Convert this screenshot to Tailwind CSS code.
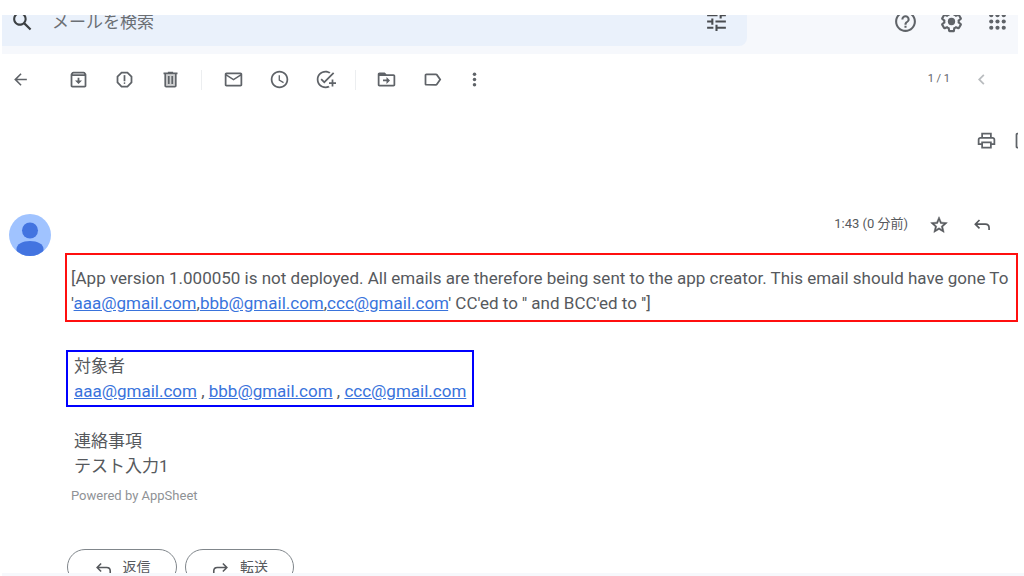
<!DOCTYPE html>
<html lang="ja">
<head>
<meta charset="utf-8">
<meta name="viewport" content="width=device-width, initial-scale=1">
<title>メール</title>
<script src="https://cdn.jsdelivr.net/npm/@tailwindcss/browser@4"></script>
</head>
<body class="bg-white pt-[15px] pl-0.5 pr-1.5 font-['Roboto','Noto_Sans_CJK_JP',sans-serif] text-[#56595d]">

<header class="h-[39px] overflow-hidden bg-[#f6f8fc]">
  <div class="-mt-[18px] flex h-[49px] items-center">
    <form class="flex h-full flex-1 items-center rounded-br-lg bg-[#eaf1fb] pr-[18px] pl-2" role="search">
      <button type="button" aria-label="検索" class="text-[#3c4043]">
        <svg class="size-[25px]" viewBox="0 0 24 24" fill="currentColor"><path d="M20.49 19l-5.73-5.73C15.53 12.2 16 10.91 16 9.5 16 5.91 13.09 3 9.5 3S3 5.91 3 9.5 5.91 16 9.5 16c1.41 0 2.7-.47 3.77-1.24L19 20.49 20.49 19zM5 9.5C5 7.01 7.01 5 9.5 5S14 7.01 14 9.5 11.99 14 9.5 14 5 11.99 5 9.5z"/></svg>
      </button>
      <input type="search" aria-label="メールを検索" placeholder="メールを検索" class="ml-[17px] min-w-0 flex-1 bg-transparent pt-0.5 text-[17px] outline-none placeholder:text-[#6b6f74]">
      <button type="button" aria-label="検索オプション" class="text-[#4a4d51]">
        <svg class="size-[25px]" viewBox="0 0 24 24" fill="currentColor"><path d="M3 17v2h6v-2H3zM3 5v2h10V5H3zm10 16v-2h8v-2h-8v-2h-2v6h2zM7 9v2H3v2h4v2h2V9H7zm14 4v-2H11v2h10zm-6-4h2V7h4V5h-4V3h-2v6z"/></svg>
      </button>
    </form>
    <div class="flex w-[271px] justify-end gap-1.5 pr-px text-[#5f6368]">
      <button type="button" aria-label="サポート" class="flex w-10 justify-center">
        <svg class="size-[25px]" viewBox="0 0 24 24" fill="currentColor"><path d="M11 18h2v-2h-2v2zm1-16C6.48 2 2 6.48 2 12s4.48 10 10 10 10-4.48 10-10S17.52 2 12 2zm0 18c-4.41 0-8-3.59-8-8s3.59-8 8-8 8 3.59 8 8-3.59 8-8 8zm0-14c-2.21 0-4 1.79-4 4h2c0-1.1.9-2 2-2s2 .9 2 2c0 2-3 1.75-3 5h2c0-2.25 3-2.5 3-5 0-2.21-1.79-4-4-4z"/></svg>
      </button>
      <button type="button" aria-label="設定" class="flex w-10 justify-center">
        <svg class="size-[25px]" viewBox="0 0 24 24" fill="currentColor"><path d="M13.85 22.25h-3.7c-.74 0-1.36-.54-1.45-1.27l-.27-1.89c-.27-.14-.53-.29-.79-.46l-1.8.72c-.7.26-1.47-.03-1.81-.65L2.2 15.53c-.35-.66-.2-1.44.36-1.88l1.53-1.19c-.01-.15-.02-.3-.02-.46 0-.15.01-.31.02-.46l-1.52-1.19c-.59-.45-.74-1.26-.37-1.88l1.85-3.19c.34-.62 1.11-.9 1.79-.63l1.81.73c.26-.17.52-.32.78-.46l.27-1.91c.09-.7.71-1.25 1.44-1.25h3.7c.74 0 1.36.54 1.45 1.27l.27 1.89c.27.14.53.29.79.46l1.8-.72c.71-.26 1.48.03 1.82.65l1.84 3.18c.36.66.2 1.44-.36 1.88l-1.52 1.19c.01.15.02.3.02.46s-.01.31-.02.46l1.52 1.19c.56.45.72 1.23.37 1.86l-1.86 3.22c-.34.62-1.11.9-1.8.63l-1.8-.72c-.26.17-.52.32-.78.46l-.27 1.91c-.1.68-.72 1.22-1.46 1.22zm-3.23-2h2.76l.37-2.55.53-.22c.44-.18.88-.44 1.34-.78l.45-.34 2.38.96 1.38-2.4-2.03-1.58.07-.56c.03-.26.06-.51.06-.78s-.03-.53-.06-.78l-.07-.56 2.03-1.58-1.39-2.4-2.39.96-.45-.35c-.42-.32-.87-.58-1.33-.77l-.52-.22-.37-2.55h-2.76l-.37 2.55-.53.21c-.44.19-.88.44-1.34.79l-.45.33-2.38-.95-1.39 2.39 2.03 1.58-.07.56a7 7 0 0 0-.06.79c0 .26.02.53.06.78l.07.56-2.03 1.58 1.38 2.4 2.39-.96.45.35c.43.33.86.58 1.33.77l.53.22.38 2.55z"/><circle cx="12" cy="12" r="3.5"/></svg>
      </button>
      <button type="button" aria-label="アプリ" class="flex w-10 justify-center">
        <svg class="size-[25px]" viewBox="0 0 24 24" fill="currentColor"><circle cx="6" cy="6" r="2"/><circle cx="12" cy="6" r="2"/><circle cx="18" cy="6" r="2"/><circle cx="6" cy="12" r="2"/><circle cx="12" cy="12" r="2"/><circle cx="18" cy="12" r="2"/><circle cx="6" cy="18" r="2"/><circle cx="12" cy="18" r="2"/><circle cx="18" cy="18" r="2"/></svg>
      </button>
    </div>
  </div>
</header>

<nav class="flex h-[51px] items-center text-[#5f6368]" aria-label="ツールバー">
  <button type="button" aria-label="戻る" class="mr-[17px] flex w-9 justify-center">
    <svg class="size-[19px]" viewBox="0 0 24 24" fill="currentColor"><path d="M20 11H7.83l5.59-5.59L12 4l-8 8 8 8 1.41-1.41L7.83 13H20v-2z"/></svg>
  </button>
  <button type="button" aria-label="アーカイブ" class="flex w-[46px] justify-center">
    <svg class="size-[21px]" viewBox="0 0 24 24" fill="currentColor"><path d="M20.54 5.23l-1.39-1.68C18.88 3.21 18.47 3 18 3H6c-.47 0-.88.21-1.16.55L3.46 5.23C3.17 5.57 3 6.02 3 6.5V19c0 1.1.9 2 2 2h14c1.1 0 2-.9 2-2V6.5c0-.48-.17-.93-.46-1.27zM6.24 5h11.52l.83 1H5.42l.82-1zM5 19V8h14v11H5zm8-9h-2v3H8l4 4 4-4h-3z"/></svg>
  </button>
  <button type="button" aria-label="迷惑メールを報告" class="flex w-[46px] justify-center">
    <svg class="size-[21px]" viewBox="0 0 24 24" fill="currentColor"><path d="M15.73 3H8.27L3 8.27v7.46L8.27 21h7.46L21 15.73V8.27L15.73 3zM19 14.9L14.9 19H9.1L5 14.9V9.1L9.1 5h5.8L19 9.1v5.8z"/><circle cx="12" cy="16" r="1"/><path d="M11 7h2v7h-2z"/></svg>
  </button>
  <button type="button" aria-label="削除" class="flex w-[46px] justify-center">
    <svg class="size-[21px]" viewBox="0 0 24 24" fill="currentColor"><path fill-opacity=".3" d="M7 6h10v13H7z"/><path d="M15 4V3H9v1H4v2h1v13c0 1.1.9 2 2 2h10c1.1 0 2-.9 2-2V6h1V4h-5zm2 15H7V6h10v13zM9 8h2v9H9zm4 0h2v9h-2z"/></svg>
  </button>
  <div class="mx-2 h-5 w-px bg-[#eceef0]"></div>
  <button type="button" aria-label="未読にする" class="flex w-[46px] justify-center">
    <svg class="size-[21px]" viewBox="0 0 24 24" fill="currentColor"><path d="M22 6c0-1.1-.9-2-2-2H4c-1.1 0-2 .9-2 2v12c0 1.1.9 2 2 2h16c1.1 0 2-.9 2-2V6zm-2 0l-8 5-8-5h16zm0 12H4V8l8 5 8-5v10z"/></svg>
  </button>
  <button type="button" aria-label="スヌーズ" class="flex w-[46px] justify-center">
    <svg class="size-[21px]" viewBox="0 0 24 24" fill="currentColor"><path d="M11.99 2C6.47 2 2 6.48 2 12s4.47 10 9.99 10C17.52 22 22 17.52 22 12S17.52 2 11.99 2zM12 20c-4.42 0-8-3.58-8-8s3.58-8 8-8 8 3.58 8 8-3.58 8-8 8zm.5-13H11v6l5.25 3.15.75-1.23-4.5-2.67z"/></svg>
  </button>
  <button type="button" aria-label="ToDo に追加" class="flex w-[46px] justify-center">
    <svg class="size-[21px]" viewBox="0 0 24 24" fill="currentColor"><path d="M22 5.18L10.59 16.6l-4.24-4.24 1.41-1.41 2.83 2.83 10-10L22 5.18zM12 20c-4.41 0-8-3.59-8-8s3.59-8 8-8c1.57 0 3.04.46 4.28 1.25l1.45-1.45C16.1 2.67 14.13 2 12 2 6.48 2 2 6.48 2 12s4.48 10 10 10c1.73 0 3.36-.44 4.78-1.22l-1.5-1.5c-1 .46-2.11.72-3.28.72zm7-5h-3v2h3v3h2v-3h3v-2h-3v-3h-2v3z"/></svg>
  </button>
  <div class="mx-[7px] h-5 w-px bg-[#eceef0]"></div>
  <button type="button" aria-label="移動" class="flex w-[46px] justify-center">
    <svg class="size-[21px]" viewBox="0 0 24 24" fill="currentColor"><path d="M20 6h-8l-2-2H4c-1.1 0-2 .9-2 2v12c0 1.1.9 2 2 2h16c1.1 0 2-.9 2-2V8c0-1.1-.9-2-2-2zm0 12H4V8h16v10zm-8-1l4-4-4-4v3H8v2h4z"/><path d="M3 5h7l2 3H3z"/></svg>
  </button>
  <button type="button" aria-label="ラベル" class="flex w-[46px] justify-center">
    <svg class="size-[21px]" viewBox="0 0 24 24" fill="currentColor"><path d="M17.63 5.84C17.27 5.33 16.67 5 16 5L5 5.01C3.9 5.01 3 5.9 3 7v10c0 1.1.9 1.99 2 1.99L16 19c.67 0 1.27-.33 1.63-.84L22 12l-4.37-6.16zM16 17H5V7h11l3.55 5L16 17z"/></svg>
  </button>
  <button type="button" aria-label="その他" class="flex w-[38px] justify-center">
    <svg class="size-[21px]" viewBox="0 0 24 24" fill="currentColor"><circle cx="12" cy="6" r="2"/><circle cx="12" cy="12" r="2"/><circle cx="12" cy="18" r="2"/></svg>
  </button>
  <span class="ml-auto text-[11px]">1 / 1</span>
  <button type="button" aria-label="前のページ" class="mr-3.5 ml-2 flex w-[46px] justify-center text-[#b9bcbf]">
    <svg class="size-[21px]" viewBox="0 0 24 24" fill="currentColor"><path d="M15.41 7.41L14 6l-6 6 6 6 1.41-1.41L10.83 12z"/></svg>
  </button>
</nav>

<main>
  <div class="mt-6 flex h-[22px] items-center justify-end overflow-hidden text-[#5f6368]">
    <button type="button" aria-label="すべて印刷" class="mr-4">
      <svg class="size-[21px]" viewBox="0 0 24 24" fill="currentColor"><path d="M19 8h-1V3H6v5H5c-1.66 0-3 1.34-3 3v6h4v4h12v-4h4v-6c0-1.66-1.34-3-3-3zM8 5h8v3H8V5zm8 14H8v-4h8v4zm2-4v-2H6v2H4v-4c0-.55.45-1 1-1h14c.55 0 1 .45 1 1v4h-2z"/></svg>
    </button>
    <button type="button" aria-label="新しいウィンドウで開く" class="w-[5px] overflow-hidden">
      <svg class="h-[21px] w-[21px] max-w-none" viewBox="0 0 24 24" fill="currentColor"><path d="M19 19H5V5h7V3H5c-1.11 0-2 .9-2 2v14c0 1.1.89 2 2 2h14c1.1 0 2-.9 2-2v-7h-2v7zM14 3v2h3.59l-9.83 9.83 1.41 1.41L19 6.41V10h2V3h-7z"/></svg>
    </button>
  </div>

  <div class="mt-[62px] flex h-[40px] items-start pl-[7px]">
    <svg class="mt-px size-[42px] shrink-0" viewBox="0 0 42 42" role="img" aria-label="送信者"><defs><clipPath id="avatar"><circle cx="21" cy="21" r="21"/></clipPath></defs><g clip-path="url(#avatar)"><path fill="#a0c3ff" d="M0 0h42v42H0z"/><circle cx="21" cy="16.5" r="8" fill="#4374e0"/><path fill="#4374e0" d="M7.5 42v-7c0-5 6-8 13.5-8s13.5 3 13.5 8v7z"/></g></svg>
    <time class="ml-auto text-[13px] leading-[22px]">1:43 (0 分前)</time>
    <button type="button" aria-label="スター" class="ml-2 flex w-[46px] justify-center pt-0.5">
      <svg class="size-[20px]" viewBox="0 0 24 24" fill="currentColor" stroke="currentColor" stroke-width=".6"><path d="M22 9.24l-7.19-.62L12 2 9.19 8.63 2 9.24l5.46 4.73L5.82 21 12 17.27 18.18 21l-1.63-7.03L22 9.24zM12 15.4l-3.76 2.27 1-4.28-3.32-2.88 4.38-.38L12 6.1l1.71 4.04 4.38.38-3.32 2.88 1 4.28L12 15.4z"/></svg>
    </button>
    <button type="button" aria-label="返信" class="mr-4 flex w-10 justify-center pt-0.5">
      <svg class="size-[20px]" viewBox="0 0 24 24" fill="none" stroke="currentColor" stroke-width="2"><path d="M9 6l-5 5 5 5M4 11h12c2.7 0 4.5 1.8 4.5 4.5V18"/></svg>
    </button>
  </div>

  <article class="ml-[63px]">
    <p class="border-2 border-[#ff0f0f] pt-[11px] pb-1 pl-1 text-[17px] leading-[25px]">[App version 1.000050 is not deployed. All emails are therefore being sent to the app creator. This email should have gone To '<a href="mailto:aaa@gmail.com" class="text-[#3973dc] underline">aaa@gmail.com</a>,<a href="mailto:bbb@gmail.com" class="text-[#3973dc] underline">bbb@gmail.com</a>,<a href="mailto:ccc@gmail.com" class="text-[#3973dc] underline">ccc@gmail.com</a>' CC'ed to '' and BCC'ed to '']</p>
    <div class="mt-7 ml-px w-fit border-2 border-[#0000ff] pt-0.5 pr-1.5 pb-px pl-1.5 text-[17px] leading-[25px]">
      <h2>対象者</h2>
      <p><a href="mailto:aaa@gmail.com" class="text-[#3973dc] underline">aaa@gmail.com</a> , <a href="mailto:bbb@gmail.com" class="text-[#3973dc] underline">bbb@gmail.com</a> , <a href="mailto:ccc@gmail.com" class="text-[#3973dc] underline">ccc@gmail.com</a></p>
    </div>
    <div class="mt-[22px] pl-[9px] text-[17px] leading-[25px]">
      <h2>連絡事項</h2>
      <p>テスト入力1</p>
    </div>
    <p class="mt-[7px] pl-1.5 text-[13px] leading-[20px] text-[#8f9296]">Powered by AppSheet</p>
  </article>

  <div class="mt-[43px] ml-[65px] flex h-6 gap-2 overflow-hidden">
    <button type="button" class="flex h-9 w-[110px] shrink-0 items-center justify-center gap-2.5 rounded-full border border-[#80868b] text-sm">
      <svg class="size-[19px]" viewBox="0 0 24 24" fill="none" stroke="currentColor" stroke-width="2"><path d="M9 7l-5 5 5 5M4 12h12c2.7 0 4.5 1.800 4.5 4.500V19"/></svg>返信
    </button>
    <button type="button" class="flex h-9 w-[109px] shrink-0 items-center justify-center gap-2.5 rounded-full border border-[#80868b] text-sm">
      <svg class="size-[19px]" viewBox="0 0 24 24" fill="none" stroke="currentColor" stroke-width="2"><path d="M15 7l5 5-5 5M20 12H8c-2.7 0-4.5 1.800-4.5 4.500V19"/></svg>転送
    </button>
  </div>
</main>
<footer class="-mr-1.5 h-[3px] bg-[#f6f8fc]"></footer>
</body>
</html>
